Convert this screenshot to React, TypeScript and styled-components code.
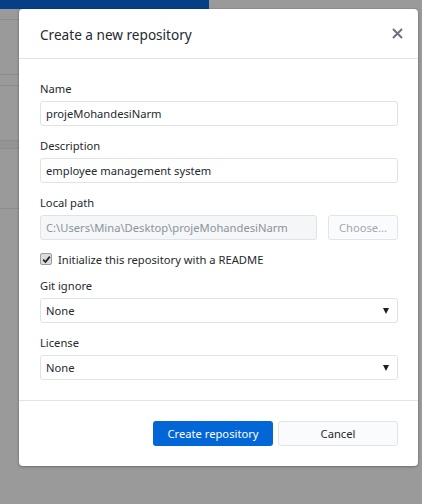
import React from "react";
import styled, { createGlobalStyle } from "styled-components";

const Global = createGlobalStyle`
  html, body { margin: 0; padding: 0; }
  body {
    width: 422px; height: 504px; overflow: hidden;
    font-family: "Noto Sans", "Open Sans", sans-serif;
    color: #24292e;
  }
  * { box-sizing: border-box; }
`;

const Stage = styled.div`
  position: relative;
  width: 422px;
  height: 504px;
  background: #9a9a9a;
  overflow: hidden;
`;

const AppBar = styled.div`
  display: flex;
  height: 9px;
`;

const AppBarTab = styled.div<{ $w: number; $bg: string }>`
  width: ${(p) => p.$w}px;
  background: ${(p) => p.$bg};
`;

const Sidebar = styled.div`
  display: flex;
  flex-direction: column;
  width: 60px;
`;

const SideRow = styled.div<{ $h: number; $shade?: boolean }>`
  height: ${(p) => p.$h}px;
  border-bottom: 1px solid #8c8c8c;
  background: ${(p) => (p.$shade ? "#949494" : "transparent")};
`;

const Dialog = styled.div`
  position: absolute;
  left: 19px;
  top: 9px;
  width: 399px;
  background: #fff;
  border-radius: 4px;
  box-shadow: 0 1px 3px rgba(0, 0, 0, 0.25), 0 0 0 1px rgba(0, 0, 0, 0.05);
  display: flex;
  flex-direction: column;
`;

const Header = styled.div`
  height: 50px;
  display: flex;
  align-items: center;
  justify-content: space-between;
  padding: 0 15px 0 21px;
  border-bottom: 1px solid #e1e4e8;
`;

const Title = styled.h1`
  margin: 0;
  font-size: 13.6px;
  font-weight: 400;
  color: #24292e;
  padding-top: 1px;
`;

const CloseButton = styled.button`
  border: none;
  background: none;
  padding: 0;
  width: 12px;
  height: 12px;
  display: flex;
  align-items: center;
  justify-content: center;
  color: #6a737d;
  cursor: pointer;
`;

const Body = styled.div`
  padding: 22px 20px 20px 21px;
  display: flex;
  flex-direction: column;
  border-bottom: 1px solid #e1e4e8;
`;

const Field = styled.div<{ $mt?: number }>`
  display: flex;
  flex-direction: column;
  margin-top: ${(p) => p.$mt ?? 0}px;
`;

const Label = styled.label`
  font-size: 11.2px;
  line-height: 16px;
  height: 16px;
  margin-bottom: 4px;
  color: #24292e;
`;

const Row = styled.div`
  display: flex;
  gap: 11px;
`;

const TextInput = styled.input`
  height: 25px;
  width: 100%;
  border: 1px solid #dfe2e6;
  border-radius: 3px;
  padding: 0 5px;
  font-family: inherit;
  font-size: 11.2px;
  color: #24292e;
  background: #fff;
  outline: none;
  &:disabled {
    background: #f4f6f8;
    color: #8b939b;
  }
`;

const SecondaryButton = styled.button<{ $w: number; $disabled?: boolean }>`
  flex: none;
  width: ${(p) => p.$w}px;
  height: 25px;
  border: 1px solid #e1e4e8;
  border-radius: 3px;
  background: #fafbfc;
  font-family: inherit;
  font-size: 11.2px;
  color: ${(p) => (p.$disabled ? "#a2a8ae" : "#24292e")};
  padding: 0;
`;

const PrimaryButton = styled.button`
  width: 120px;
  height: 25px;
  border: none;
  border-radius: 3px;
  background: #0366d6;
  color: #fff;
  font-family: inherit;
  font-size: 11.2px;
  padding: 0;
`;

const CheckRow = styled.label`
  display: flex;
  align-items: center;
  gap: 6px;
  margin-top: 12px;
  height: 14px;
  font-size: 11.2px;
  color: #24292e;
`;

const CheckBox = styled.span`
  width: 12px;
  height: 12px;
  border: 1px solid #9c9c9c;
  border-radius: 2px;
  background: #dcdcdc;
  display: flex;
  align-items: center;
  justify-content: center;
`;

const SelectBox = styled.div`
  height: 25px;
  border: 1px solid #dfe2e6;
  border-radius: 3px;
  display: flex;
  align-items: center;
  justify-content: space-between;
  padding: 0 8px 0 5px;
  font-size: 11.2px;
  color: #24292e;
`;

const Caret = styled.span`
  width: 0;
  height: 0;
  border-left: 3.5px solid transparent;
  border-right: 3.5px solid transparent;
  border-top: 6px solid #1b1f23;
`;

const Footer = styled.div`
  height: 65px;
  display: flex;
  align-items: center;
  justify-content: flex-end;
  gap: 5px;
  padding: 0 20px 0 21px;
`;

const CloseIcon = () => (
  <svg width="11" height="11" viewBox="0 0 11 11">
    <path d="M1 1 L10 10 M10 1 L1 10" stroke="currentColor" strokeWidth="2" />
  </svg>
);

const Check = () => (
  <svg width="9" height="9" viewBox="0 0 9 9">
    <path d="M1.2 4.6 L3.5 7 L7.8 1.6" stroke="#222" strokeWidth="1.8" fill="none" />
  </svg>
);

export default function App() {
  return (
    <>
      <Global />
      <Stage>
        <AppBar>
          <AppBarTab $w={209} $bg="#073f86" />
        </AppBar>
        <Sidebar>
          <SideRow $h={11} />
          <SideRow $h={55} />
          <SideRow $h={11} />
          <SideRow $h={55} />
          <SideRow $h={8} $shade />
          <SideRow $h={60} />
        </Sidebar>
        <Dialog>
          <Header>
            <Title>Create a new repository</Title>
            <CloseButton aria-label="Close">
              <CloseIcon />
            </CloseButton>
          </Header>
          <Body>
            <Field>
              <Label>Name</Label>
              <TextInput defaultValue="projeMohandesiNarm" />
            </Field>
            <Field $mt={12}>
              <Label>Description</Label>
              <TextInput defaultValue="employee management system" />
            </Field>
            <Field $mt={12}>
              <Label>Local path</Label>
              <Row>
                <TextInput disabled defaultValue="C:\Users\Mina\Desktop\projeMohandesiNarm" />
                <SecondaryButton $w={70} $disabled>
                  Choose...
                </SecondaryButton>
              </Row>
            </Field>
            <CheckRow>
              <CheckBox>
                <Check />
              </CheckBox>
              Initialize this repository with a README
            </CheckRow>
            <Field $mt={12}>
              <Label>Git ignore</Label>
              <SelectBox>
                None
                <Caret />
              </SelectBox>
            </Field>
            <Field $mt={12}>
              <Label>License</Label>
              <SelectBox>
                None
                <Caret />
              </SelectBox>
            </Field>
          </Body>
          <Footer>
            <PrimaryButton>Create repository</PrimaryButton>
            <SecondaryButton $w={120}>Cancel</SecondaryButton>
          </Footer>
        </Dialog>
      </Stage>
    </>
  );
}
